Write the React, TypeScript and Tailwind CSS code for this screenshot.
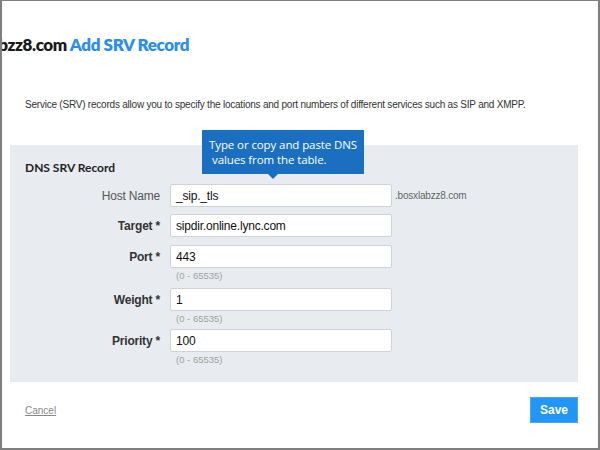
import React from "react";

const Row = ({
  label,
  bold,
  value,
  hint,
  suffix,
  mt,
}: {
  label: string;
  bold?: boolean;
  value: string;
  hint?: boolean;
  suffix?: string;
  mt: string;
}) => (
  <div className={`flex flex-col ${mt}`}>
    <div className="flex items-center">
      <div
        className={`w-[150px] text-right text-[12px] tracking-[-0.2px] ${bold ? "font-bold text-[#333]" : "text-[#555]"}`}
      >
        {label}
      </div>
      <div className="ml-[10px] w-[222px] h-[23px] bg-white border border-[#cfd3d7] rounded-[2px] flex items-center px-[5px] text-[12px] tracking-[-0.2px] text-[#111]">
        {value}
      </div>
      {suffix && <div className="ml-[3px] text-[10px] tracking-[-0.2px] text-[#666]">{suffix}</div>}
    </div>
    {hint && (
      <div className="ml-[166px] mt-[2px] h-[12px] leading-[12px] text-[9.5px] text-[#a0a0a0]">(0 - 65535)</div>
    )}
  </div>
);

export default function App() {
  return (
    <div
      className="w-[600px] h-[450px] bg-white border-t border-l-2 border-r-2 border-b-2 border-[#7f7f7f] relative overflow-hidden flex flex-col"
      style={{ fontFamily: '"Liberation Sans", Arial, sans-serif' }}
    >
      <div className="mt-[32px] w-[187px] overflow-hidden flex justify-end h-[24px]">
        <div
          className="whitespace-nowrap text-[17px] leading-[24px] font-extrabold tracking-[-0.4px]"
          style={{ fontFamily: 'Lato, "Open Sans", sans-serif' }}
        >
          <span className="text-[#1a1a1a]">bosxlabzz8.com </span>
          <span className="text-[#2a8ef0]">Add SRV Record</span>
        </div>
      </div>

      <div className="mt-[41px] ml-[23px] text-[10px] leading-[14px] tracking-[-0.22px] text-[#333] whitespace-nowrap">
        Service (SRV) records allow you to specify the locations and port numbers of different services such as SIP and XMPP.
      </div>

      <div className="mt-[33px] ml-[8px] w-[568px] bg-[#e8ecf0] pt-[15px] pb-[16px] flex flex-col">
        <div
          className="ml-[15px] text-[12px] leading-[16px] font-bold text-[#222]"
          style={{ fontFamily: 'Lato, "Open Sans", sans-serif' }}
        >
          DNS SRV Record
        </div>
        <Row label="Host Name" value="_sip._tls" suffix=".bosxlabzz8.com" mt="mt-[8px]" />
        <Row label="Target *" bold value="sipdir.online.lync.com" mt="mt-[7px]" />
        <Row label="Port *" bold value="443" hint mt="mt-[8px]" />
        <Row label="Weight *" bold value="1" hint mt="mt-[6px]" />
        <Row label="Priority *" bold value="100" hint mt="mt-[4px]" />
      </div>

      <div className="mt-[15px] ml-[23px] mr-[20px] flex items-center justify-between">
        <span className="text-[10px] text-[#888] underline">Cancel</span>
        <button className="w-[48px] h-[26px] bg-[#2196f6] border border-[#4aa6f0] text-white text-[12px] font-bold flex items-center justify-center">
          Save
        </button>
      </div>

      <div
        className="absolute left-[200px] top-[129px] w-[162px] h-[44px] bg-[#1a6fc1] text-white text-[11.5px] leading-[15px] pl-[7px] pt-[7px]"
        style={{ fontFamily: '"Open Sans", "Noto Sans", sans-serif' }}
      >
        <div className="whitespace-nowrap tracking-[-0.1px]">Type or copy and paste DNS</div>
        <div className="whitespace-nowrap tracking-[-0.1px] pl-[3px]">values from the table.</div>
        <div className="absolute left-[66px] top-[44px] w-0 h-0 border-l-[5px] border-r-[5px] border-t-[5px] border-l-transparent border-r-transparent border-t-[#1a6fc1]" />
      </div>
    </div>
  );
}
